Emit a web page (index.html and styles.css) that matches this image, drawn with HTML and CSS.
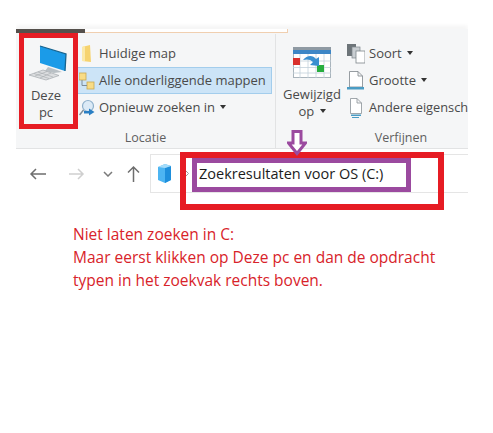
FILE: index.html
```html
<!DOCTYPE html>
<html lang="en">
<head>
    <meta charset="UTF-8">
    <title>Zoekresultaten</title>
    <link rel="stylesheet" href="styles.css">
</head>
<body>
    <div class="shot">
        <div class="window">
            <div class="tab-strip">
                <div class="tab-dark"></div>
                <div class="tab-light"></div>
            </div>

            <div class="ribbon">
                <div class="group group-locatie">
                    <div class="group-body">
                        <div class="big-button big-deze">
                            <svg class="icon-pc" width="40" height="38" viewBox="26 44 40 38">
                                <path d="M38 46 L64 54 L63 71 L38 63 Z" fill="#1b9be8"/>
                                <path d="M38 46 L64 54 L63 71" fill="none" stroke="#17648f" stroke-width="1.300"/>
                                <path d="M46 67 L55 70 L60 72 L52 73 L43 71 Z" fill="#b9c0c5"/>
                                <path d="M27 75 L41 70 L57 75.500 L44 80 Z" fill="#dcdee0" stroke="#a4a9ad" stroke-width=".7"/>
                                <path d="M32 73.500 L47 78.500 M36 72 L51 77 M33 76 L45 71.500 M38 78 L49 73" stroke="#a4a9ad" stroke-width=".6"/>
                            </svg>
                            <span>Deze<br>pc</span>
                        </div>
                        <div class="options">
                            <div class="option">
                                <svg width="16" height="18" viewBox="0 0 16 18">
                                    <path d="M3 2 L11 0 L12 17 L3 16 Z" fill="#f6d36f"/>
                                    <path d="M3 2 L6 1 L6 16 L3 16 Z" fill="#fbe9a9"/>
                                </svg>
                                <span>Huidige map</span>
                            </div>
                            <div class="option option-active">
                                <svg width="16" height="18" viewBox="0 0 16 18">
                                    <rect x="0" y="1" width="7" height="7" fill="#f8dc86" stroke="#c8a850" stroke-width=".8"/>
                                    <rect x="8" y="10" width="7" height="7" fill="#f8dc86" stroke="#c8a850" stroke-width=".8"/>
                                    <path d="M3 8 V13.500 H8" fill="none" stroke="#7d8c99"/>
                                </svg>
                                <span>Alle onderliggende mappen</span>
                            </div>
                            <div class="option">
                                <svg width="16" height="18" viewBox="0 0 16 18">
                                    <circle cx="9" cy="7" r="5.500" fill="#dceaf6" stroke="#8fb0cb" stroke-width="1.200"/>
                                    <path d="M4.500 11 L0.500 16" stroke="#7d8c99" stroke-width="1.500"/>
                                    <path d="M5 12 H10 V9.500 L15.500 13 L10 16.500 V14.500 H5 Z" fill="#2a7fc4"/>
                                </svg>
                                <span>Opnieuw zoeken in <i class="caret"></i></span>
                            </div>
                        </div>
                    </div>
                    <div class="group-label">Locatie</div>
                </div>

                <div class="group group-verfijnen">
                    <div class="group-body">
                        <div class="big-button big-gewijzigd">
                            <svg width="38" height="31" viewBox="0 0 38 31">
                                <rect x=".5" y=".5" width="37" height="30" fill="#fff" stroke="#a9b4bc"/>
                                <rect x="0" y="0" width="38" height="3" fill="#8f9aa3"/>
                                <rect x="0" y="3" width="38" height="4" fill="#3d86c6"/>
                                <path d="M0 14 H38 M0 20.500 H38 M0 26 H38 M7 7 V31 M15 7 V31 M23 7 V31 M31 7 V31" stroke="#c3d0da" stroke-width=".8"/>
                                <rect x="0" y="11" width="7" height="7" fill="#d9302c"/>
                                <rect x="24" y="18" width="7" height="7" fill="#27ae3f"/>
                                <path d="M10 13 C14 8 20 8 23 12 L26 10 L26 19 L17 18 L20 15 C17 12 14 12 10 13 Z" fill="#3a8fd0"/>
                            </svg>
                            <span>Gewijzigd<br>op <i class="caret"></i></span>
                        </div>
                        <div class="options options-small">
                            <div class="option">
                                <svg width="18" height="20" viewBox="0 0 18 20">
                                    <rect x="0" y="0" width="9" height="12" fill="#6d7479"/>
                                    <rect x="5" y="3" width="8" height="11" fill="#c9ced2" stroke="#7d858b" stroke-width=".7"/>
                                    <rect x="9" y="7" width="9" height="12" fill="#fff" stroke="#7d858b" stroke-width=".8"/>
                                </svg>
                                <span>Soort <i class="caret"></i></span>
                            </div>
                            <div class="option">
                                <svg width="18" height="20" viewBox="0 0 18 20">
                                    <path d="M2.500 .5 H11 L15.500 5 V16 H2.500 Z M11 .5 V5 H15.500" fill="#fff" stroke="#7d858b" stroke-width=".8"/>
                                    <rect x="0" y="16" width="17" height="2.500" fill="#4b9cc4"/>
                                </svg>
                                <span>Grootte <i class="caret"></i></span>
                            </div>
                            <div class="option">
                                <svg width="18" height="20" viewBox="0 0 18 20">
                                    <path d="M3.500 .5 H10 L14.500 5 V15.500 H3.500 Z M10 .5 V5 H14.500" fill="#fff" stroke="#8a9298" stroke-width=".8"/>
                                    <rect x="4" y="16.500" width="10" height="1.500" fill="#4b9cc4"/>
                                    <rect x="5" y="19" width="7" height="1" fill="#4b9cc4"/>
                                </svg>
                                <span class="option-last">Andere eigensch</span>
                            </div>
                        </div>
                    </div>
                    <div class="group-label">Verfijnen</div>
                </div>
            </div>

            <div class="address-row">
                <div class="nav">
                    <svg class="nav-back" width="17" height="12" viewBox="0 0 17 12">
                        <path d="M17 6 H2 M7 1 L2 6 L7 11" fill="none" stroke="#6e6e6e" stroke-width="1.500"/>
                    </svg>
                    <svg class="nav-forward" width="16" height="12" viewBox="0 0 16 12">
                        <path d="M0 6 H14 M9 1 L14 6 L9 11" fill="none" stroke="#cfcfcf" stroke-width="1.500"/>
                    </svg>
                    <svg class="nav-down" width="10" height="6" viewBox="0 0 10 6">
                        <path d="M1 1 L5 5 L9 1" fill="none" stroke="#7a7a7a" stroke-width="1.500"/>
                    </svg>
                    <svg class="nav-up" width="13" height="17" viewBox="0 0 13 17">
                        <path d="M6.500 17 V2 M1 7.500 L6.500 2 L12 7.500" fill="none" stroke="#6e6e6e" stroke-width="1.500"/>
                    </svg>
                </div>
                <div class="address-box">
                    <svg class="cube" width="15" height="19" viewBox="0 0 15 19">
                        <path d="M1 3 L8 0 L14 2 L14 16 L8 19 L1 16 Z" fill="#4db5f2"/>
                        <path d="M8 4 L14 2 L14 16 L8 19 Z" fill="#1e8fdc"/>
                        <path d="M1 3 L8 0 L14 2 L8 4 Z" fill="#a5dcfa"/>
                    </svg>
                    <svg class="crumb" width="5" height="9" viewBox="0 0 5 9">
                        <path d="M.5 .5 L4.500 4.500 L.5 8.500" fill="none" stroke="#9a9a9a"/>
                    </svg>
                    <span class="address-text">Zoekresultaten voor OS (C:)</span>
                </div>
            </div>
        </div>

        <div class="note">
            Niet laten zoeken in C:<br>
            Maar eerst klikken op Deze pc en dan de opdracht<br>
            typen in het zoekvak rechts boven.
        </div>

        <!-- annotations drawn on top of the screenshot -->
        <div class="mark mark-pc"></div>
        <div class="mark mark-address"></div>
        <div class="mark mark-title"></div>
        <svg class="mark-arrow" width="20" height="26" viewBox="0 0 20 26">
            <path d="M6 1.500 H14 V13 H18.500 L10 23.500 L1.500 13 H6 Z" fill="#fff" stroke="#9b4a9f" stroke-width="3"/>
        </svg>
    </div>
</body>
</html>
```

FILE: styles.css
```css
body {
    margin: 0;
    background-color: #fff;
    font-family: "Open Sans", "Noto Sans", sans-serif;
    color: #4a4a4a;
}
.shot {
    position: relative;
    width: 493px;
    height: 433px;
    overflow: hidden;
}
.window {
    width: 452px;
    margin-left: 16px;
    padding-top: 29px;
    overflow: hidden;
}

/* tab strip */
.tab-strip {
    display: flex;
    height: 5px;
    box-shadow: 0 -3px 4px rgba(0, 0, 0, 0.05);
    background-color: #f5f6f7;
}
.tab-dark {
    width: 69px;
    height: 4px;
    background-color: #55504c;
}
.tab-light {
    width: 203px;
    height: 4px;
    background-color: #fff;
    border-bottom: 1px solid #f0cfb0;
    border-right: 1px solid #f0cfb0;
    box-sizing: border-box;
}

/* ribbon */
.ribbon {
    display: flex;
    height: 114px;
    background-color: #f5f6f7;
    border-bottom: 1px solid #e2e3e4;
}
.group {
    display: flex;
    flex-direction: column;
}
.group-locatie {
    width: 259px;
    border-right: 1px solid #e2e3e4;
}
.group-verfijnen {
    flex-grow: 1;
    min-width: 0;
}
.group-body {
    display: flex;
    height: 94px;
}
.group-label {
    text-align: center;
    font-size: 12.500px;
    line-height: 20px;
    color: #5f5f5f;
}
.group-verfijnen .group-label {
    padding-left: 58px;
}
.big-button {
    display: flex;
    flex-direction: column;
    align-items: center;
    flex-shrink: 0;
    font-size: 13px;
    line-height: 17px;
    text-align: center;
}
.big-deze {
    width: 60px;
    padding-top: 10px;
}
.big-deze .icon-pc {
    margin-left: 4px;
    margin-bottom: 5px;
}
.big-gewijzigd {
    width: 64px;
    padding-top: 13px;
    margin-left: 4px;
}
.big-gewijzigd svg {
    margin-bottom: 8px;
}
.options {
    display: flex;
    flex-direction: column;
    padding-top: 6px;
    width: 196px;
    min-width: 0;
}
.options-small {
    width: 122px;
}
.option {
    display: flex;
    align-items: center;
    gap: 4px;
    height: 27px;
    padding-left: 3px;
    font-size: 13px;
    white-space: nowrap;
    box-sizing: border-box;
}
.option span {
    margin-bottom: 2px;
}
.option svg {
    flex-shrink: 0;
}
.option-active {
    background-color: #cce4f7;
    border: 1px solid #a3cdec;
    padding-left: 2px;
    border-left-color: #7f9db9;
}
.option-last {
    font-size: 12.800px;
}
.caret {
    display: inline-block;
    border-left: 3.500px solid transparent;
    border-right: 3.500px solid transparent;
    border-top: 4px solid #333;
    margin-left: 2px;
    vertical-align: 3px;
}

/* address bar */
.address-row {
    display: flex;
    height: 62px;
    background-color: #fff;
    padding-top: 5px;
    box-sizing: border-box;
}
.nav {
    display: flex;
    align-items: center;
    width: 134px;
    height: 39px;
    flex-shrink: 0;
}
.nav-back {
    margin-left: 13px;
}
.nav-forward {
    margin-left: 23px;
}
.nav-down {
    margin-left: 18px;
}
.nav-up {
    margin-left: 14px;
}
.address-box {
    display: flex;
    align-items: center;
    flex-grow: 1;
    height: 39px;
    border: 1px solid #e5e5e5;
    border-right: none;
    box-sizing: border-box;
}
.cube {
    margin-left: 6px;
}
.crumb {
    margin-left: 12px;
}
.address-text {
    margin-left: 10px;
    font-size: 14.500px;
    color: #1c1c1c;
    white-space: nowrap;
}

/* red note below the screenshot */
.note {
    margin: 12px 0 0 73px;
    font-size: 15.500px;
    line-height: 23px;
    color: #d8232a;
}

/* annotations */
.mark {
    position: absolute;
    box-sizing: border-box;
}
.mark-pc {
    left: 19px;
    top: 33px;
    width: 59px;
    height: 96px;
    border: 5px solid #e61c24;
}
.mark-address {
    left: 180px;
    top: 152px;
    width: 264px;
    height: 58px;
    border: 6px solid #e61c24;
}
.mark-title {
    left: 192px;
    top: 158px;
    width: 219px;
    height: 34px;
    border: 5px solid #9b4a9f;
}
.mark-arrow {
    position: absolute;
    left: 287px;
    top: 130px;
}
```
